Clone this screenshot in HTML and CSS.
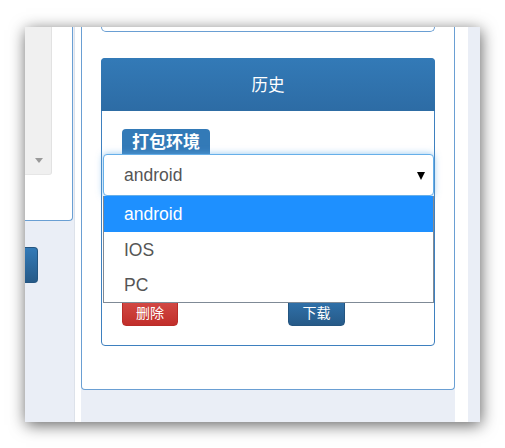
FILE: index.html
```html
<!DOCTYPE html>
<html lang="zh">
<head>
<meta charset="utf-8">
<title>历史</title>
<link rel="stylesheet" href="styles.css">
</head>
<body>
<div class="frame">
  <div class="left">
    <div class="lpanel">
      <div class="lscroll"><span class="larrow"></span></div>
    </div>
    <div class="lbtn"></div>
  </div>
  <div class="strip-l"></div>
  <div class="mid">
    <div class="main">
      <div class="upper"></div>
      <div class="history">
        <div class="hhead">历史</div>
        <div class="hbody">
          <span class="badge">打包环境</span>
          <div class="selwrap">
            <div class="select">android<span class="caret"></span></div>
            <ul class="menu">
              <li class="opt active">android</li>
              <li class="opt">IOS</li>
              <li class="opt">PC</li>
            </ul>
          </div>
          <div class="actions">
            <button class="btn btn-red">删除</button>
            <button class="btn btn-blue">下载</button>
          </div>
        </div>
      </div>
    </div>
  </div>
  <div class="strip-r"></div>
  <div class="right"></div>
</div>
</body>
</html>
```
FILE: styles.css
```css
html, body {
  margin: 0;
  padding: 0;
  background: #ffffff;
}
body {
  width: 505px;
  height: 448px;
  overflow: hidden;
  font-family: "Liberation Sans", "Noto Sans CJK SC", Arial, sans-serif;
}
.frame {
  margin: 27px 0 0 25px;
  width: 455px;
  height: 395px;
  display: flex;
  background: #eaeef6;
  box-shadow: 1px 3px 15px rgba(0, 0, 0, 0.62);
  overflow: hidden;
}
.left {
  width: 49px;
  border-right: 1px solid #dde2ea;
  background: #eaeef6;
  display: flex;
  flex-direction: column;
}
.lpanel {
  width: 47px;
  height: 193px;
  background: #ffffff;
  border-right: 1px solid #6a9fd3;
  border-bottom: 1px solid #6a9fd3;
  border-bottom-right-radius: 4px;
}
.lscroll {
  width: 27px;
  height: 148px;
  background: #f0f0f0;
  border-right: 1px solid #e2e2e2;
  border-bottom: 1px solid #e6e6e6;
  border-bottom-right-radius: 3px;
  display: flex;
  align-items: flex-end;
  justify-content: center;
  box-sizing: border-box;
  padding-bottom: 11px;
}
.larrow {
  width: 0;
  height: 0;
  border-left: 4px solid transparent;
  border-right: 4px solid transparent;
  border-top: 5px solid #9a9a9a;
  margin-left: 1px;
}
.lbtn {
  margin-top: 26px;
  width: 13px;
  height: 36px;
  background: linear-gradient(#337ab7, #265a88);
  border: 1px solid #245580;
  border-left: none;
  border-radius: 0 4px 4px 0;
  box-sizing: border-box;
}
.strip-l {
  width: 6px;
  background: #ffffff;
}
.mid {
  width: 374px;
  background: #eaeef6;
}
.main {
  background: #ffffff;
  border: 1px solid #6a9fd3;
  border-top: none;
  border-radius: 0 0 4px 4px;
  height: 363px;
  box-sizing: border-box;
  padding: 0 19px;
}
.upper {
  height: 4px;
  border: 1px solid #6a9fd3;
  border-top: none;
  border-radius: 0 0 5px 5px;
  margin-bottom: 26px;
}
.history {
  border: 1px solid #3e80bf;
  border-radius: 4px;
  background: #ffffff;
}
.hhead {
  height: 52px;
  margin: -1px -1px 0 -1px;
  border-radius: 4px 4px 0 0;
  background: linear-gradient(#337ab7, #2d6ca5);
  color: #ffffff;
  font-size: 16.5px;
  display: flex;
  align-items: center;
  justify-content: center;
  border-bottom: 1px solid #2e6da4;
}
.hbody {
  padding: 18px 0 19px 0;
}
.badge {
  display: inline-block;
  margin-left: 20px;
  height: 25px;
  line-height: 27px;
  padding: 0 10px;
  background: #337ab7;
  color: #ffffff;
  font-weight: bold;
  font-size: 17px;
  border-radius: 4px 4px 0 0;
  vertical-align: top;
}
.selwrap {
  position: relative;
  margin-left: 1px;
}
.select {
  height: 42px;
  box-sizing: border-box;
  border: 1px solid #66afe9;
  border-radius: 4px;
  box-shadow: 0 0 7px rgba(102, 175, 233, 0.7);
  padding-left: 20px;
  display: flex;
  align-items: center;
  font-size: 17.5px;
  color: #555555;
  background: #ffffff;
  position: relative;
}
.caret {
  position: absolute;
  right: 8px;
  top: 17px;
  width: 0;
  height: 0;
  border-left: 4px solid transparent;
  border-right: 4px solid transparent;
  border-top: 8px solid #000000;
}
.menu {
  position: absolute;
  left: 0;
  right: 0;
  top: 42px;
  margin: 0;
  padding: 0;
  list-style: none;
  background: #ffffff;
  border: 1px solid #7f8a96;
  border-top: none;
  z-index: 2;
}
.opt {
  height: 36px;
  display: flex;
  align-items: center;
  padding-left: 20px;
  font-size: 17.5px;
  color: #555555;
}
.opt:last-child {
  height: 34px;
}
.opt.active {
  background: #1e90ff;
  color: #ffffff;
}
.actions {
  margin-top: 96px;
  display: flex;
  padding-left: 20px;
}
.btn {
  height: 34px;
  width: 56px;
  border-radius: 4px;
  color: #ffffff;
  font-family: "Liberation Sans", "Noto Sans CJK SC", sans-serif;
  font-size: 14px;
  padding: 5px 0 0 0;
  box-sizing: border-box;
}
.btn-red {
  background: linear-gradient(#d9534f, #c12e2a);
  border: 1px solid #b92c28;
}
.btn-blue {
  margin-left: 110px;
  width: 57px;
  background: linear-gradient(#337ab7, #265a88);
  border: 1px solid #245580;
}
.strip-r {
  width: 13px;
  background: #ffffff;
}
.right {
  width: 12px;
  background: #eaeef6;
}
```
